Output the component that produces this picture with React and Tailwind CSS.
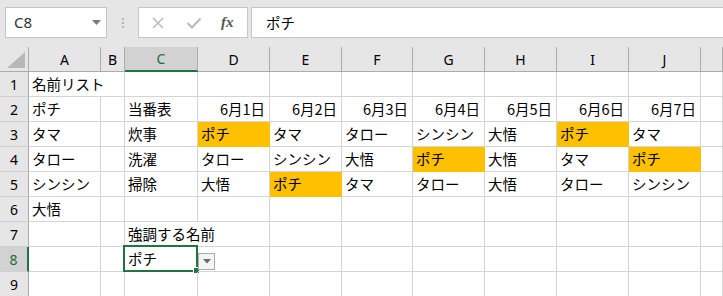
import React from 'react'

const COLS = ['A', 'B', 'C', 'D', 'E', 'F', 'G', 'H', 'I', 'J', '']

// row data: [A, B, C, D, E, F, G, H, I, J, K]
const ROWS = [
  ['名前リスト', '', '', '', '', '', '', '', '', '', ''],
  ['ポチ', '', '当番表', '6月1日', '6月2日', '6月3日', '6月4日', '6月5日', '6月6日', '6月7日', ''],
  ['タマ', '', '炊事', 'ポチ', 'タマ', 'タロー', 'シンシン', '大悟', 'ポチ', 'タマ', ''],
  ['タロー', '', '洗濯', 'タロー', 'シンシン', '大悟', 'ポチ', '大悟', 'タマ', 'ポチ', ''],
  ['シンシン', '', '掃除', '大悟', 'ポチ', 'タマ', 'タロー', '大悟', 'タロー', 'シンシン', ''],
  ['大悟', '', '', '', '', '', '', '', '', '', ''],
  ['', '', '強調する名前', '', '', '', '', '', '', '', ''],
  ['', '', 'ポチ', '', '', '', '', '', '', '', ''],
  ['', '', '', '', '', '', '', '', '', '', ''],
]

const jp = { fontFamily: '"Noto Sans CJK JP", "Noto Sans", sans-serif' }
const ui = { fontFamily: '"Noto Sans", "Liberation Sans", sans-serif' }

function Cell({ value, row, col }) {
  const highlight = row >= 3 && row <= 5 && col >= 3 && value === 'ポチ'
  const overflow = (row === 1 && col === 0) || (row === 7 && col === 2)
  const right = row === 2 && col >= 3
  const selected = row === 8 && col === 2

  let cls = 'relative flex items-center whitespace-nowrap border-b text-[14.5px] text-black '
  cls += overflow ? '' : 'border-r '
  cls += highlight ? 'bg-[#ffc000] border-[#ffc000] ' : 'border-[#d4d4d4] '
  cls += right ? 'justify-end pr-[4px] ' : 'pl-[3px] '

  return (
    <div className={cls} style={jp}>
      <span className="leading-none pt-[1px]">{value}</span>
      {selected && (
        <>
          <div className="absolute -left-[2px] -top-[2px] -right-[1px] -bottom-[1px] border-2 border-[#217346] pointer-events-none" />
          <div className="absolute -right-[3px] -bottom-[3px] w-[5px] h-[5px] bg-[#217346] border border-white box-content" />
          <div className="absolute left-[73px] top-[6px] w-[17px] h-[17px] border border-[#ababab] bg-[#f4f4f4] flex items-center justify-center">
            <svg width="8" height="5" viewBox="0 0 8 5">
              <polygon points="0,0 8,0 4,4.5" fill="#6a6a6a" />
            </svg>
          </div>
        </>
      )}
    </div>
  )
}

export default function App() {
  return (
    <div className="w-[723px] h-[296px] overflow-hidden bg-white select-none">
      {/* Formula bar */}
      <div className="h-[47px] bg-[#e6e6e6] flex items-start pt-[7px] pl-[5px]">
        <div className="w-[102px] h-[31px] bg-white border border-[#c6c6c6] flex items-center justify-between pl-[8px] pr-[5px]">
          <span className="text-[15px] text-[#333]" style={ui}>C8</span>
          <svg width="9" height="5" viewBox="0 0 9 5">
            <polygon points="0,0 9,0 4.5,5" fill="#7a7a7a" />
          </svg>
        </div>
        <div className="w-[31px] h-[31px] flex flex-col items-center justify-center gap-[2px]">
          <span className="w-[2px] h-[2px] bg-[#b4b4b4]" />
          <span className="w-[2px] h-[2px] bg-[#b4b4b4]" />
          <span className="w-[2px] h-[2px] bg-[#b4b4b4]" />
        </div>
        <div className="w-[110px] h-[31px] bg-white border border-[#c6c6c6] flex items-center pl-[12px]">
          <svg width="14" height="14" viewBox="0 0 14 14" className="mr-[21px]">
            <path d="M2 2 L12 12 M12 2 L2 12" stroke="#bcbcbc" strokeWidth="1.6" />
          </svg>
          <svg width="16" height="14" viewBox="0 0 16 14" className="mr-[19px]">
            <path d="M1.5 7 L6 11.5 L14.5 2.5" stroke="#bcbcbc" strokeWidth="2.2" fill="none" />
          </svg>
          <span className="text-[15px] italic font-bold text-[#555] leading-none" style={{ fontFamily: '"Liberation Serif", serif' }}>
            fx
          </span>
        </div>
        <div className="flex-1 ml-[3px] h-[31px] bg-white border border-[#c6c6c6] border-r-0 flex items-center pl-[14px]">
          <span className="text-[14.5px] text-black" style={jp}>ポチ</span>
        </div>
      </div>

      {/* Sheet grid */}
      <div className="grid grid-cols-[29px_72px_24px_73px_72px_72px_71px_72px_72px_72px_72px_1fr] auto-rows-[25px]">
        {/* corner */}
        <div className="relative bg-[#e6e6e6] border-r border-b border-[#ababab]">
          <svg width="18" height="16" viewBox="0 0 18 16" className="absolute right-[3px] bottom-[3px]">
            <polygon points="18,0 18,16 0,16" fill="#b8b8b8" />
          </svg>
        </div>
        {COLS.map((c, i) => (
          <div
            key={'h' + i}
            className={
              'flex items-center justify-center text-[14px] border-r ' +
              (c === 'C'
                ? 'bg-[#d2d2d2] text-[#1e6b40] border-b-2 border-b-[#217346] border-r-[#ababab]'
                : 'bg-[#e6e6e6] text-black border-b border-[#ababab]')
            }
            style={ui}
          >
            {c}
          </div>
        ))}

        {ROWS.map((row, r) => (
          <React.Fragment key={r}>
            <div
              className={
                'flex items-center justify-center text-[14px] border-b border-[#cfcfcf] ' +
                (r === 7
                  ? 'bg-[#d2d2d2] text-[#1e6b40] border-r-2 border-r-[#217346]'
                  : 'bg-[#e6e6e6] text-black border-r border-r-[#ababab]')
              }
              style={ui}
            >
              {r + 1}
            </div>
            {row.map((v, c) => (
              <Cell key={c} value={v} row={r + 1} col={c} />
            ))}
          </React.Fragment>
        ))}
      </div>
    </div>
  )
}
